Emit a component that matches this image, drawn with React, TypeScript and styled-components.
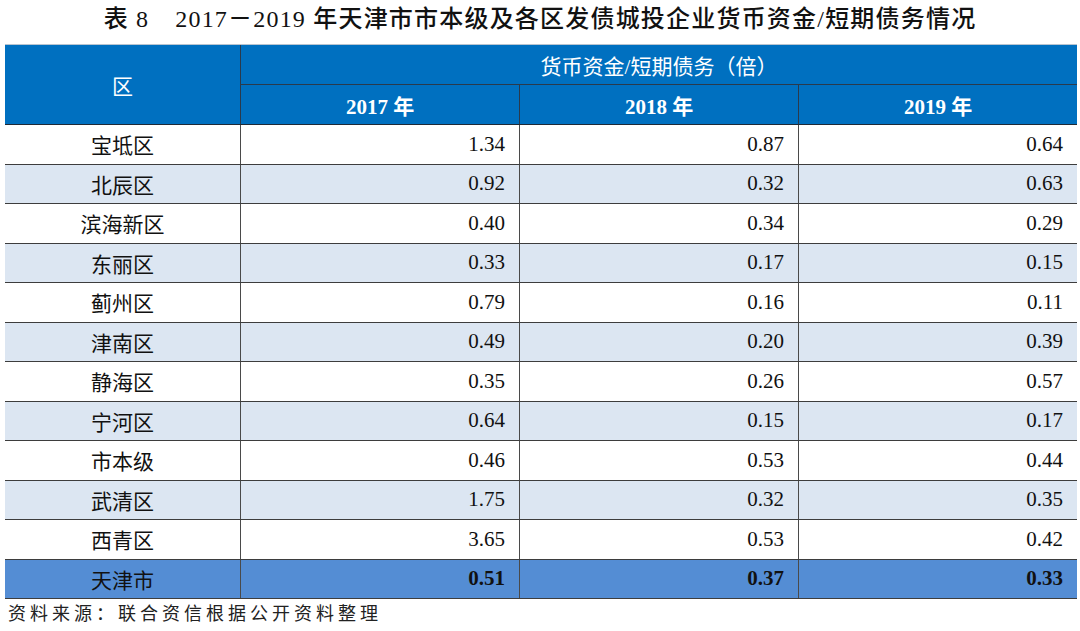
import styled, { createGlobalStyle } from "styled-components";

const GlobalStyle = createGlobalStyle`
  body {
    margin: 0;
    background: #ffffff;
    font-family: "Liberation Serif", "Noto Sans CJK SC", serif;
    color: #111111;
  }
`;

const COLS = "235px 279px 279px 279px";

const Page = styled.div`
  width: 1080px;
  height: 631px;
  padding-top: 4px;
  box-sizing: border-box;
`;

const Title = styled.h1`
  margin: 0 0 10px;
  text-align: center;
  font: 500 24px/30px "Liberation Serif", "Noto Sans CJK SC", serif;
  color: #111111;
  letter-spacing: 1.2px;
`;

const TitleGap = styled.span`
  display: inline-block;
  width: 26px;
`;

const Table = styled.div`
  margin-left: 5px;
  width: 1072px;
`;

const Header = styled.div`
  display: grid;
  grid-template-columns: ${COLS};
  grid-template-rows: 40px 39px;
  background: #0070c0;
  border-top: 1px solid #b8c4d0;
  border-bottom: 1px solid #1f2a36;
  color: #ffffff;
`;

const HeadCell = styled.div<{ $bold?: boolean; $span?: boolean; $line?: boolean; $top?: boolean }>`
  display: flex;
  align-items: center;
  justify-content: center;
  font-size: 21px;
  font-weight: ${({ $bold }) => ($bold ? 700 : 400)};
  grid-row: ${({ $span }) => ($span ? "1 / span 2" : "auto")};
  grid-column: ${({ $top }) => ($top ? "2 / span 3" : "auto")};
  border-left: ${({ $line }) => ($line ? "1.5px solid #2a3a4c" : "none")};
  border-bottom: ${({ $top }) => ($top ? "1.5px solid #2a3a4c" : "none")};
`;

const Row = styled.div<{ $shade: "white" | "light" | "total" }>`
  display: grid;
  grid-template-columns: ${COLS};
  height: 39.5px;
  box-sizing: border-box;
  border-bottom: 1px solid #3d3d3d;
  background: ${({ $shade }) =>
    $shade === "light" ? "#dce6f2" : $shade === "total" ? "#548dd4" : "#ffffff"};
  font-weight: ${({ $shade }) => ($shade === "total" ? 700 : 400)};
`;

const NameCell = styled.div`
  display: flex;
  align-items: center;
  justify-content: center;
  font-size: 21px;
  font-weight: 400;
`;

const NumCell = styled.div`
  display: flex;
  align-items: center;
  justify-content: flex-end;
  padding-right: 14px;
  font-size: 21px;
  border-left: 1.5px solid #4a4a4a;
`;

const Source = styled.p`
  margin: 2px 0 0 8px;
  font: 400 18px/22px "Noto Sans CJK SC", sans-serif;
  letter-spacing: 4px;
  color: #222222;
`;

const rows: [string, string, string, string][] = [
  ["宝坻区", "1.34", "0.87", "0.64"],
  ["北辰区", "0.92", "0.32", "0.63"],
  ["滨海新区", "0.40", "0.34", "0.29"],
  ["东丽区", "0.33", "0.17", "0.15"],
  ["蓟州区", "0.79", "0.16", "0.11"],
  ["津南区", "0.49", "0.20", "0.39"],
  ["静海区", "0.35", "0.26", "0.57"],
  ["宁河区", "0.64", "0.15", "0.17"],
  ["市本级", "0.46", "0.53", "0.44"],
  ["武清区", "1.75", "0.32", "0.35"],
  ["西青区", "3.65", "0.53", "0.42"],
];

const App = () => {
  return (
    <Page>
      <GlobalStyle />
      <Title>
        表 8<TitleGap />
        2017－2019 年天津市市本级及各区发债城投企业货币资金/短期债务情况
      </Title>
      <Table>
        <Header>
          <HeadCell $span>区</HeadCell>
          <HeadCell $top $line>
            货币资金/短期债务（倍）
          </HeadCell>
          <HeadCell $bold $line>
            2017 年
          </HeadCell>
          <HeadCell $bold $line>
            2018 年
          </HeadCell>
          <HeadCell $bold $line>
            2019 年
          </HeadCell>
        </Header>
        {rows.map((row, index) => (
          <Row key={row[0]} $shade={index % 2 === 1 ? "light" : "white"}>
            <NameCell>{row[0]}</NameCell>
            <NumCell>{row[1]}</NumCell>
            <NumCell>{row[2]}</NumCell>
            <NumCell>{row[3]}</NumCell>
          </Row>
        ))}
        <Row $shade="total">
          <NameCell>天津市</NameCell>
          <NumCell>0.51</NumCell>
          <NumCell>0.37</NumCell>
          <NumCell>0.33</NumCell>
        </Row>
      </Table>
      <Source>资料来源：联合资信根据公开资料整理</Source>
    </Page>
  );
};

export default App;
